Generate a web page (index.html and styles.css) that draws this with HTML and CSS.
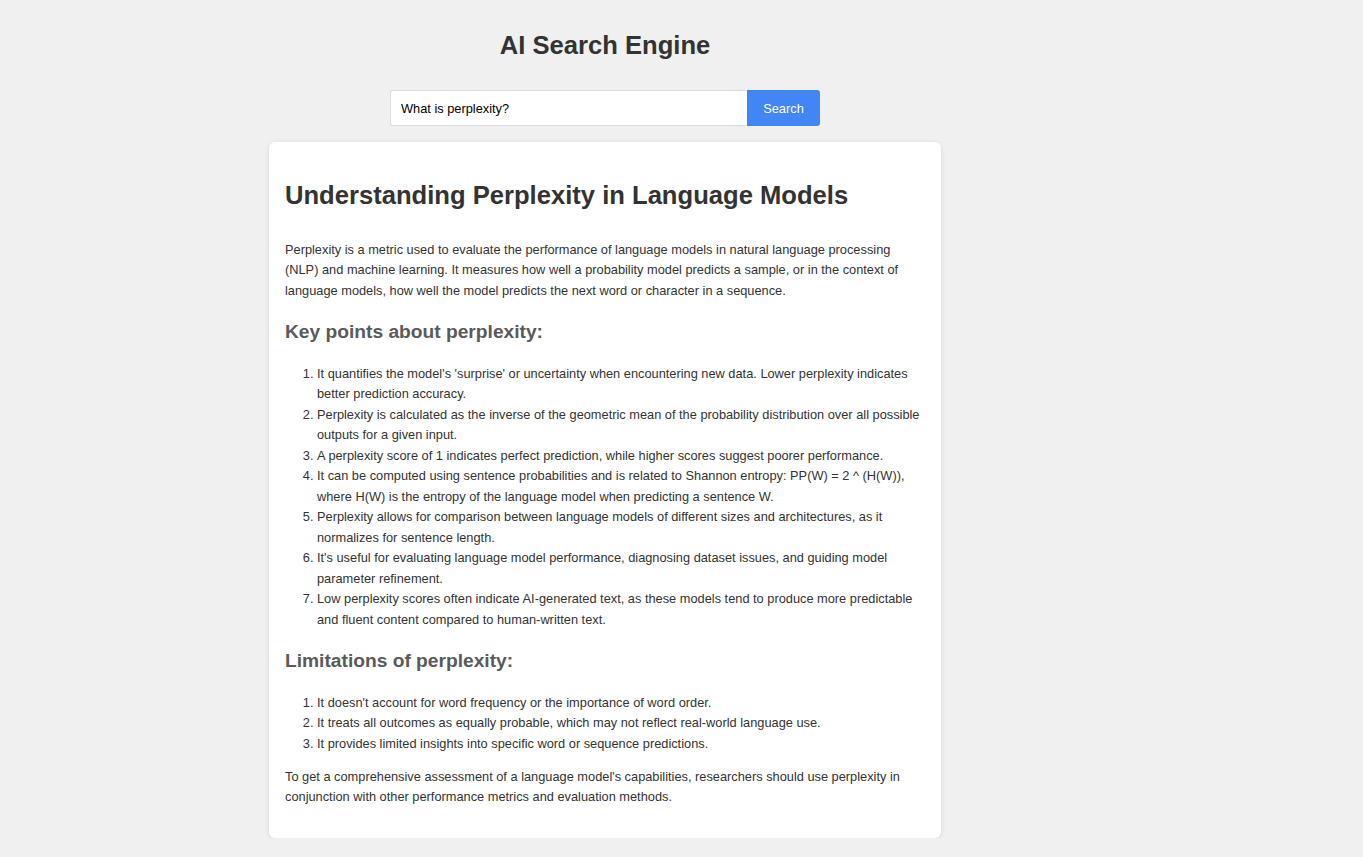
FILE: index.html
```html
<!DOCTYPE html>
<html lang="en">
<head>
<meta charset="utf-8">
<title>AI Search Engine</title>
<link rel="stylesheet" href="styles.css">
</head>
<body>
<div class="page">
  <h1 class="title">AI Search Engine</h1>
  <form class="search">
    <input class="search-input" type="text" value="What is perplexity?">
    <button class="search-btn" type="button">Search</button>
  </form>
  <div class="card">
    <h1 class="card-title">Understanding Perplexity in Language Models</h1>
    <p>Perplexity is a metric used to evaluate the performance of language models in natural language processing (NLP) and machine learning. It measures how well a probability model predicts a sample, or in the context of language models, how well the model predicts the next word or character in a sequence.</p>
    <h2>Key points about perplexity:</h2>
    <ol>
      <li>It quantifies the model's 'surprise' or uncertainty when encountering new data. Lower perplexity indicates better prediction accuracy.</li>
      <li>Perplexity is calculated as the inverse of the geometric mean of the probability distribution over all possible outputs for a given input.</li>
      <li>A perplexity score of 1 indicates perfect prediction, while higher scores suggest poorer performance.</li>
      <li>It can be computed using sentence probabilities and is related to Shannon entropy: PP(W) = 2 ^ (H(W)), where H(W) is the entropy of the language model when predicting a sentence W.</li>
      <li>Perplexity allows for comparison between language models of different sizes and architectures, as it normalizes for sentence length.</li>
      <li>It's useful for evaluating language model performance, diagnosing dataset issues, and guiding model parameter refinement.</li>
      <li>Low perplexity scores often indicate AI-generated text, as these models tend to produce more predictable and fluent content compared to human-written text.</li>
    </ol>
    <h2>Limitations of perplexity:</h2>
    <ol>
      <li>It doesn't account for word frequency or the importance of word order.</li>
      <li>It treats all outcomes as equally probable, which may not reflect real-world language use.</li>
      <li>It provides limited insights into specific word or sequence predictions.</li>
    </ol>
    <p>To get a comprehensive assessment of a language model's capabilities, researchers should use perplexity in conjunction with other performance metrics and evaluation methods.</p>
  </div>
</div>
</body>
</html>
```

FILE: styles.css
```css
html, body {
  margin: 0;
  padding: 0;
  background: #f0f0f0;
}

body {
  font-family: "Liberation Sans", Arial, sans-serif;
  font-size: 12.8px;
  line-height: 1.6;
  color: #333;
}

.page {
  width: 1210px;
  padding-top: 25px;
  display: flex;
  flex-direction: column;
  align-items: center;
}

.title {
  margin: 0;
  font-size: 25.6px;
  line-height: 41px;
  font-weight: bold;
  color: #333;
}

.search {
  margin: 24px 0 0;
  display: flex;
  width: 430px;
  height: 36px;
}

.search-input {
  flex: 1;
  box-sizing: border-box;
  height: 36px;
  margin: 0;
  padding: 0 10px;
  border: 1px solid #ddd;
  border-right: none;
  border-radius: 3px 0 0 3px;
  background: #fff;
  font-family: "Liberation Sans", Arial, sans-serif;
  font-size: 12.8px;
  color: #000;
  outline: none;
}

.search-btn {
  box-sizing: border-box;
  width: 73px;
  height: 36px;
  margin: 0;
  padding: 0;
  border: none;
  border-radius: 0 3px 3px 0;
  background: #4285f4;
  color: #fff;
  font-family: "Liberation Sans", Arial, sans-serif;
  font-size: 12.8px;
}

.card {
  box-sizing: border-box;
  width: 672px;
  margin-top: 16px;
  padding: 16px 16px 17px;
  background: #fff;
  border-radius: 6px;
  box-shadow: 0 1px 5px rgba(0, 0, 0, 0.1);
}

.card-title {
  margin: 17px 0 24px;
  font-size: 25.6px;
  line-height: 41px;
  font-weight: bold;
  color: #333;
}

.card p {
  margin: 0 0 12.8px;
}

.card h2 {
  margin: 16px 0 15.9px;
  font-size: 19.2px;
  line-height: 30.72px;
  font-weight: bold;
  color: #5a5a5a;
}

.card ol {
  margin: 15.9px 0 12.8px;
  padding-left: 32px;
}
```
